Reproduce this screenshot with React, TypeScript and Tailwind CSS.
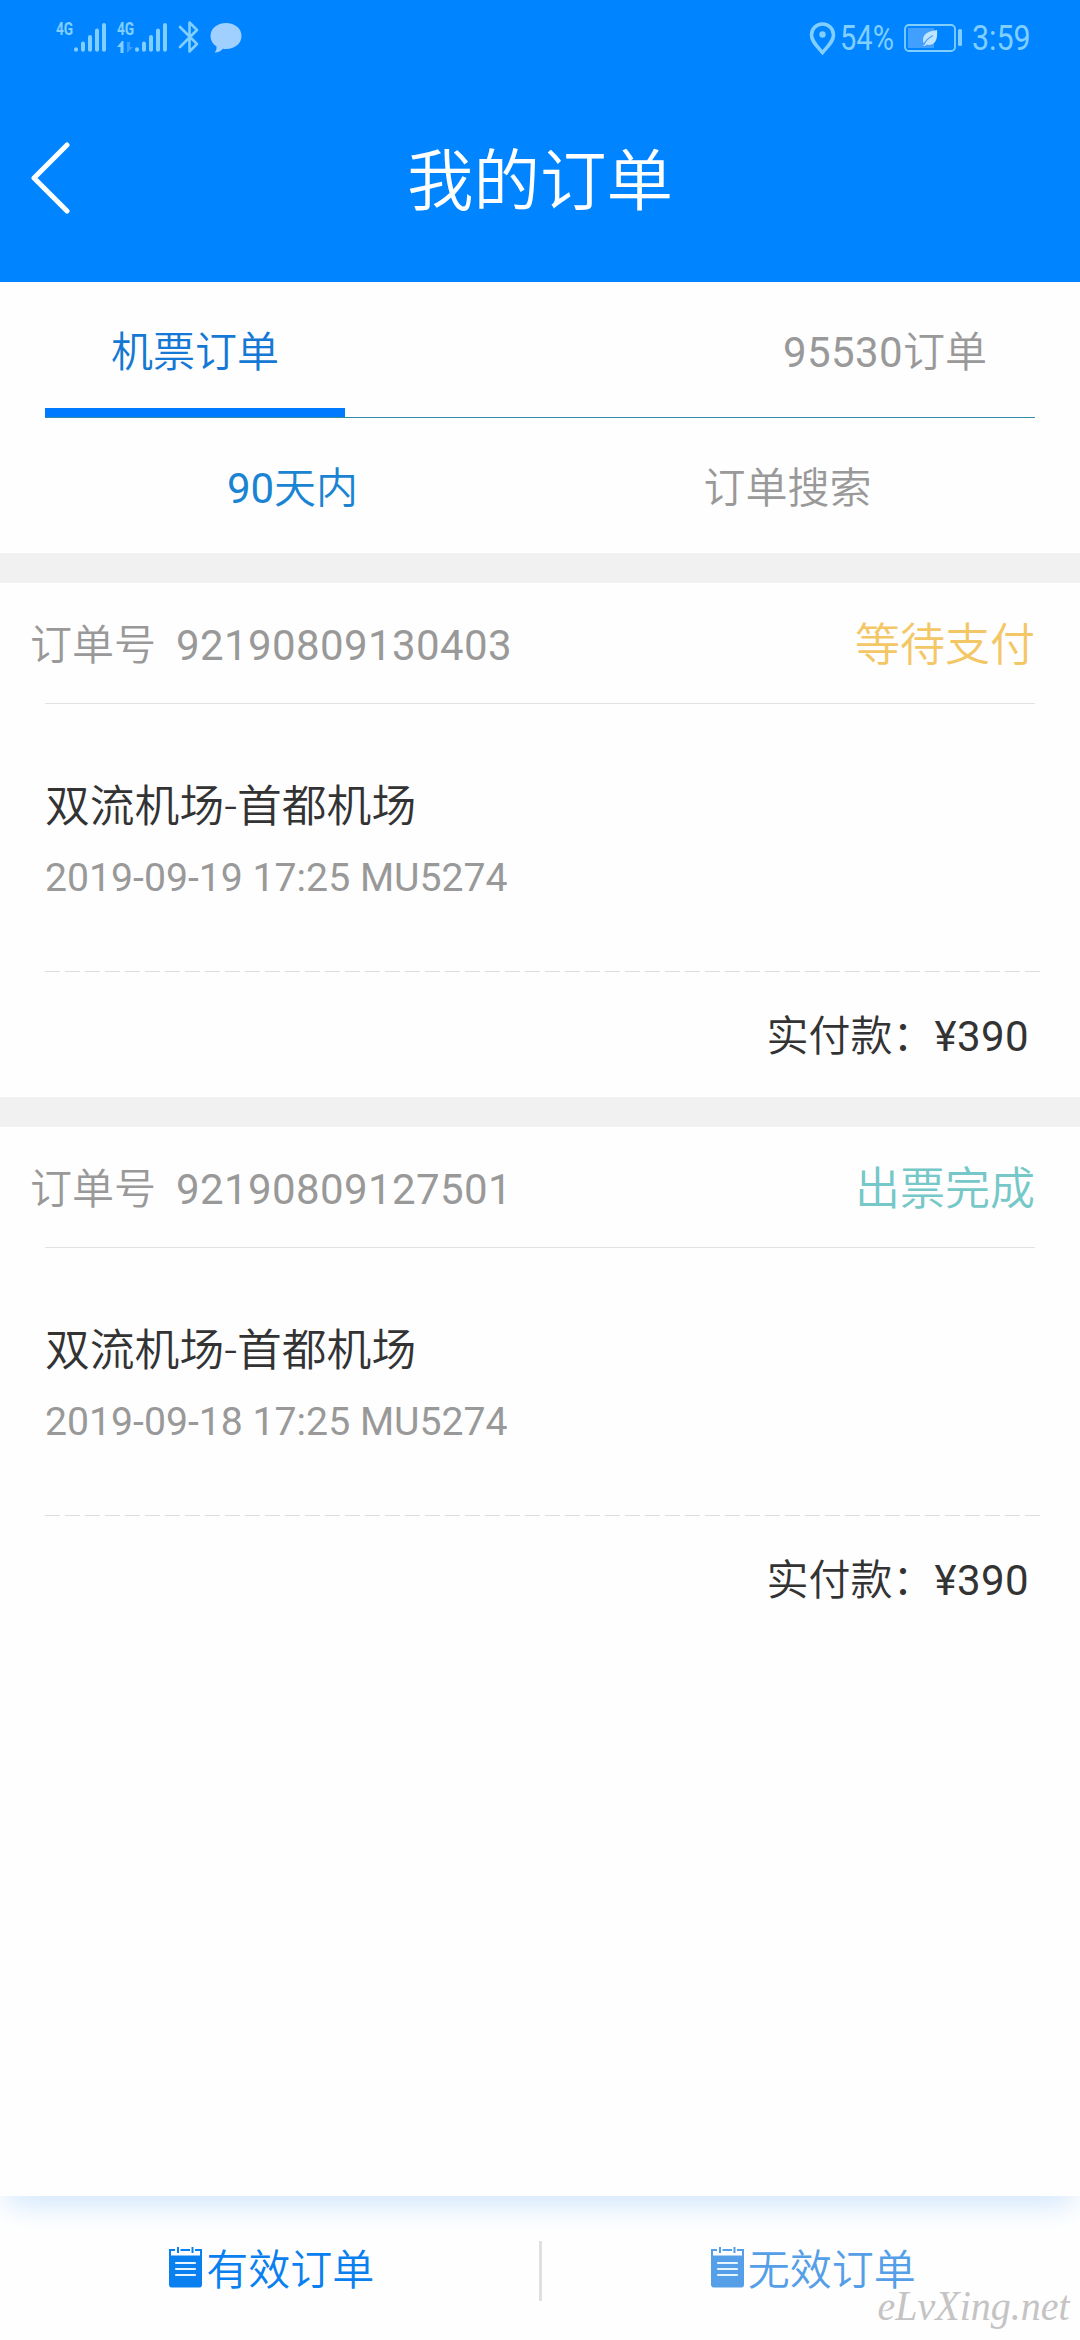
import { useState } from 'react'
import clsx from 'clsx'

const orders = [
  {
    id: '92190809130403',
    status: '等待支付',
    statusColor: 'text-[#f3c766]',
    route: '双流机场-首都机场',
    flight: '2019-09-19 17:25 MU5274',
    price: '¥390',
  },
  {
    id: '92190809127501',
    status: '出票完成',
    statusColor: 'text-[#76c8c8]',
    route: '双流机场-首都机场',
    flight: '2019-09-18 17:25 MU5274',
    price: '¥390',
  },
]

type Order = (typeof orders)[number]

function Signal() {
  return (
    <svg width="34" height="32" viewBox="0 0 34 32" stroke="currentColor" strokeWidth="4" strokeLinecap="round">
      <path d="M3 28.3v.4M10 22.5v6.2M17 16v12.7M24 9.5v19.2M31 4v24.7" />
    </svg>
  )
}

function StatusBar() {
  return (
    <div className="flex h-[76px] items-start justify-between pl-[56px] pr-[50px] font-normal text-[#80cfff]">
      <div className="flex h-[76px]">
        {/* SIM 1 */}
        <div className="w-[17px] pt-[20px]">
          <div className="origin-left scale-x-[0.72] text-[19px] leading-[18px] font-bold">4G</div>
        </div>
        <div className="pt-[21px]"><Signal /></div>
        {/* SIM 2 */}
        <div className="ml-[10px] w-[17px] pt-[20px]">
          <div className="origin-left scale-x-[0.72] text-[19px] leading-[18px] font-bold">4G</div>
          <svg className="mt-[3px]" width="17" height="12" viewBox="0 0 17 12">
            <path d="M6.5 0v12H3.5V6H0L5 0z" fill="currentColor" />
            <path d="M10 1v11l6-6h-3V1z" fill="#3d9fff" />
          </svg>
        </div>
        <div className="pt-[21px]"><Signal /></div>
        <svg className="mt-[20px] ml-[10px]" width="22" height="34" viewBox="0 0 22 34" fill="none" stroke="currentColor" strokeWidth="2.6" strokeLinejoin="round" strokeLinecap="round">
          <path d="M2 7l17 17-7.5 7.5V2.5L19 10 2 27" />
        </svg>
        <svg className="mt-[22px] ml-[10px]" width="32" height="32" viewBox="0 0 32 32" fill="#9fd0ff">
          <path d="M16 1C7 1 .5 6.5 .5 14c0 4.5 2.3 8 6 10.5.3 2.5-.5 4.5-2 6 3.5.2 6.5-1.3 8.5-3.800C23.500 28 31.500 22.500 31.500 14 31.500 6.500 25 1 16 1z" />
        </svg>
      </div>

      <div className="flex h-[76px] items-center">
        <svg width="27" height="33" viewBox="0 0 27 33" fill="none" stroke="currentColor">
          <path d="M13.5 2C7 2 2.5 7 2.5 13c0 6.5 5.5 11 11 17.500 5.500-6.500 11-11 11-17.500 0-6-4.500-11-11-11z" strokeWidth="3.6" />
          <circle cx="13.5" cy="12.5" r="3.2" fill="currentColor" stroke="none" />
        </svg>
        <div className="ml-[4px] w-[64px] pt-px">
          <div className="origin-left scale-x-[0.83] text-[35px] leading-[40px]">54%</div>
        </div>
        <svg width="60" height="28" viewBox="0 0 60 28">
          <rect x="1" y="1" width="50" height="26" rx="4" fill="none" stroke="currentColor" strokeWidth="1.8" />
          <rect x="4" y="4" width="26" height="20" fill="#409fff" />
          <path d="M33 6c-7 1-14 3-14 10 0 2 .5 3 1.500 4.200L19 22h2l1.200-1.200C31 22 34 16 33 6z" fill="#bfe4ff" />
          <path d="M20 20.500c2-5 5-7 9-9" fill="none" stroke="#409fff" strokeWidth="1.2" />
          <rect x="54" y="5" width="4" height="17" rx="1.5" fill="currentColor" />
        </svg>
        <div className="ml-[8px] w-[58px] pt-px">
          <div className="origin-left scale-x-[0.87] text-[35px] leading-[40px]">3:59</div>
        </div>
      </div>
    </div>
  )
}

function NoteIcon() {
  return (
    <svg width="33" height="41" viewBox="0 0 33 41" fill="none" stroke="currentColor" className="mb-[2px] shrink-0">
      <path d="M1 9V3h5M11.5 3H21M26 3h6v6M9 0v6M23.5 0v6" strokeWidth="2" />
      <path d="M0 8.500h33v29a3 3 0 0 1-3 3H3a3 3 0 0 1-3-3z" fill="currentColor" stroke="none" />
      <path d="M7 16h19M7 22h19M7 28h19" stroke="#e6f4ff" strokeWidth="2.2" strokeLinecap="round" />
    </svg>
  )
}

function OrderCard({ order }: { order: Order }) {
  return (
    <section className="h-[544px] border-t-[30px] border-[#f1f1f1]">
      <div className="flex h-[120px] items-center justify-between pt-[5px] pr-[45px] pl-[30px]">
        <div className="flex text-[42px] text-[#999]">
          <span>订单号</span>
          <span className="ml-[20px] font-normal tracking-[0.4px]">{order.id}</span>
        </div>
        <span className={clsx('text-[45px]', order.statusColor)}>{order.status}</span>
      </div>
      <div className="mx-[45px] h-px bg-[#e2e2e2]" />

      <div className="h-[267px] px-[45px] pt-[73px]">
        <div className="text-[44.8px] leading-[60px] text-[#333]">{order.route}</div>
        <div className="mt-[14px] text-[39.2px] leading-[54px] font-normal text-[#999]">{order.flight}</div>
      </div>
      <div className="mr-[35px] ml-[45px] h-px bg-[repeating-linear-gradient(90deg,#dedede_0_15px,transparent_15px_20px)]" />

      <div className="flex h-[125px] items-center justify-end pt-[4px] pr-[51px] text-[42px] text-[#333]">
        <span>实付款：</span>
        <span className="font-normal tracking-[0.4px]">{order.price}</span>
      </div>
    </section>
  )
}

export default function App() {
  const [source, setSource] = useState('ticket')
  const [range, setRange] = useState('recent')
  const [valid, setValid] = useState(true)

  return (
    <div className="relative flex h-[2340px] w-[1080px] flex-col overflow-hidden bg-[#fefefe] font-['Roboto','Noto_Sans_CJK_SC',sans-serif] font-[350]">
      <header className="h-[282px] shrink-0 bg-[#0084ff]">
        <StatusBar />
        <div className="flex h-[206px] items-center justify-between px-[30px] text-white">
          <svg width="42" height="74" viewBox="0 0 42 74" fill="none" stroke="currentColor" strokeWidth="5" strokeLinecap="round" strokeLinejoin="round">
            <path d="M37 3L4 36l33 33" />
          </svg>
          <h1 className="pt-[6px] text-[66.5px] leading-[80px] font-[350]">我的订单</h1>
          <span className="w-[42px]" />
        </div>
      </header>

      {/* Order source */}
      <nav className="mx-[45px] flex h-[136px] shrink-0 justify-between border-b border-[#338ba6] text-[42px]">
        <button
          onClick={() => setSource('ticket')}
          className={clsx('h-[135px] w-[300px] border-b-[9px] pt-[15px]', source === 'ticket' ? 'border-[#007aff] text-[#1478d4]' : 'border-transparent text-[#999]')}
        >
          机票订单
        </button>
        <button
          onClick={() => setSource('hotline')}
          className={clsx('h-[135px] w-[300px] border-b-[9px] pt-[15px]', source === 'hotline' ? 'border-[#007aff] text-[#1478d4]' : 'border-transparent text-[#999]')}
        >
          <span className="font-normal tracking-[0.4px]">95530</span>订单
        </button>
      </nav>

      <div className="mx-[45px] grid h-[135px] shrink-0 grid-cols-2 pt-[5px] text-[42px]">
        <button onClick={() => setRange('recent')} className={range === 'recent' ? 'text-[#1a84d2]' : 'text-[#999]'}>
          <span className="font-normal">90</span>天内
        </button>
        <button onClick={() => setRange('search')} className={range === 'search' ? 'text-[#1a84d2]' : 'text-[#999]'}>
          订单搜索
        </button>
      </div>

      <main className="flex-1">
        {orders.map((order) => (
          <OrderCard key={order.id} order={order} />
        ))}
      </main>

      <footer className="relative flex h-[144px] shrink-0 items-center overflow-hidden text-[42px]">
        <div className="absolute -top-[10px] right-[12px] left-[12px] h-[10px] shadow-[0_0_30px_4px_#b5d8fb]" />
        <button
          onClick={() => setValid(true)}
          className={clsx('flex flex-1 items-center justify-center gap-[4px] pl-[5px]', valid ? 'text-[#0a80f0]' : 'text-[#559fe8]')}
        >
          <NoteIcon />
          <span className="pt-[4px]">有效订单</span>
        </button>
        <div className="mt-[6px] h-[60px] w-[3px] bg-[#e0e0e0]" />
        <button
          onClick={() => setValid(false)}
          className={clsx('flex flex-1 items-center justify-center gap-[4px] pl-[5px]', valid ? 'text-[#559fe8]' : 'text-[#0a80f0]')}
        >
          <NoteIcon />
          <span className="pt-[4px]">无效订单</span>
        </button>
      </footer>

      <div className="absolute right-[10px] bottom-[10px] origin-right scale-x-[0.93] font-['Liberation_Serif',serif] text-[43px] leading-[48px] font-normal text-[#c4c4c4] italic">
        eLvXing.net
      </div>
    </div>
  )
}
